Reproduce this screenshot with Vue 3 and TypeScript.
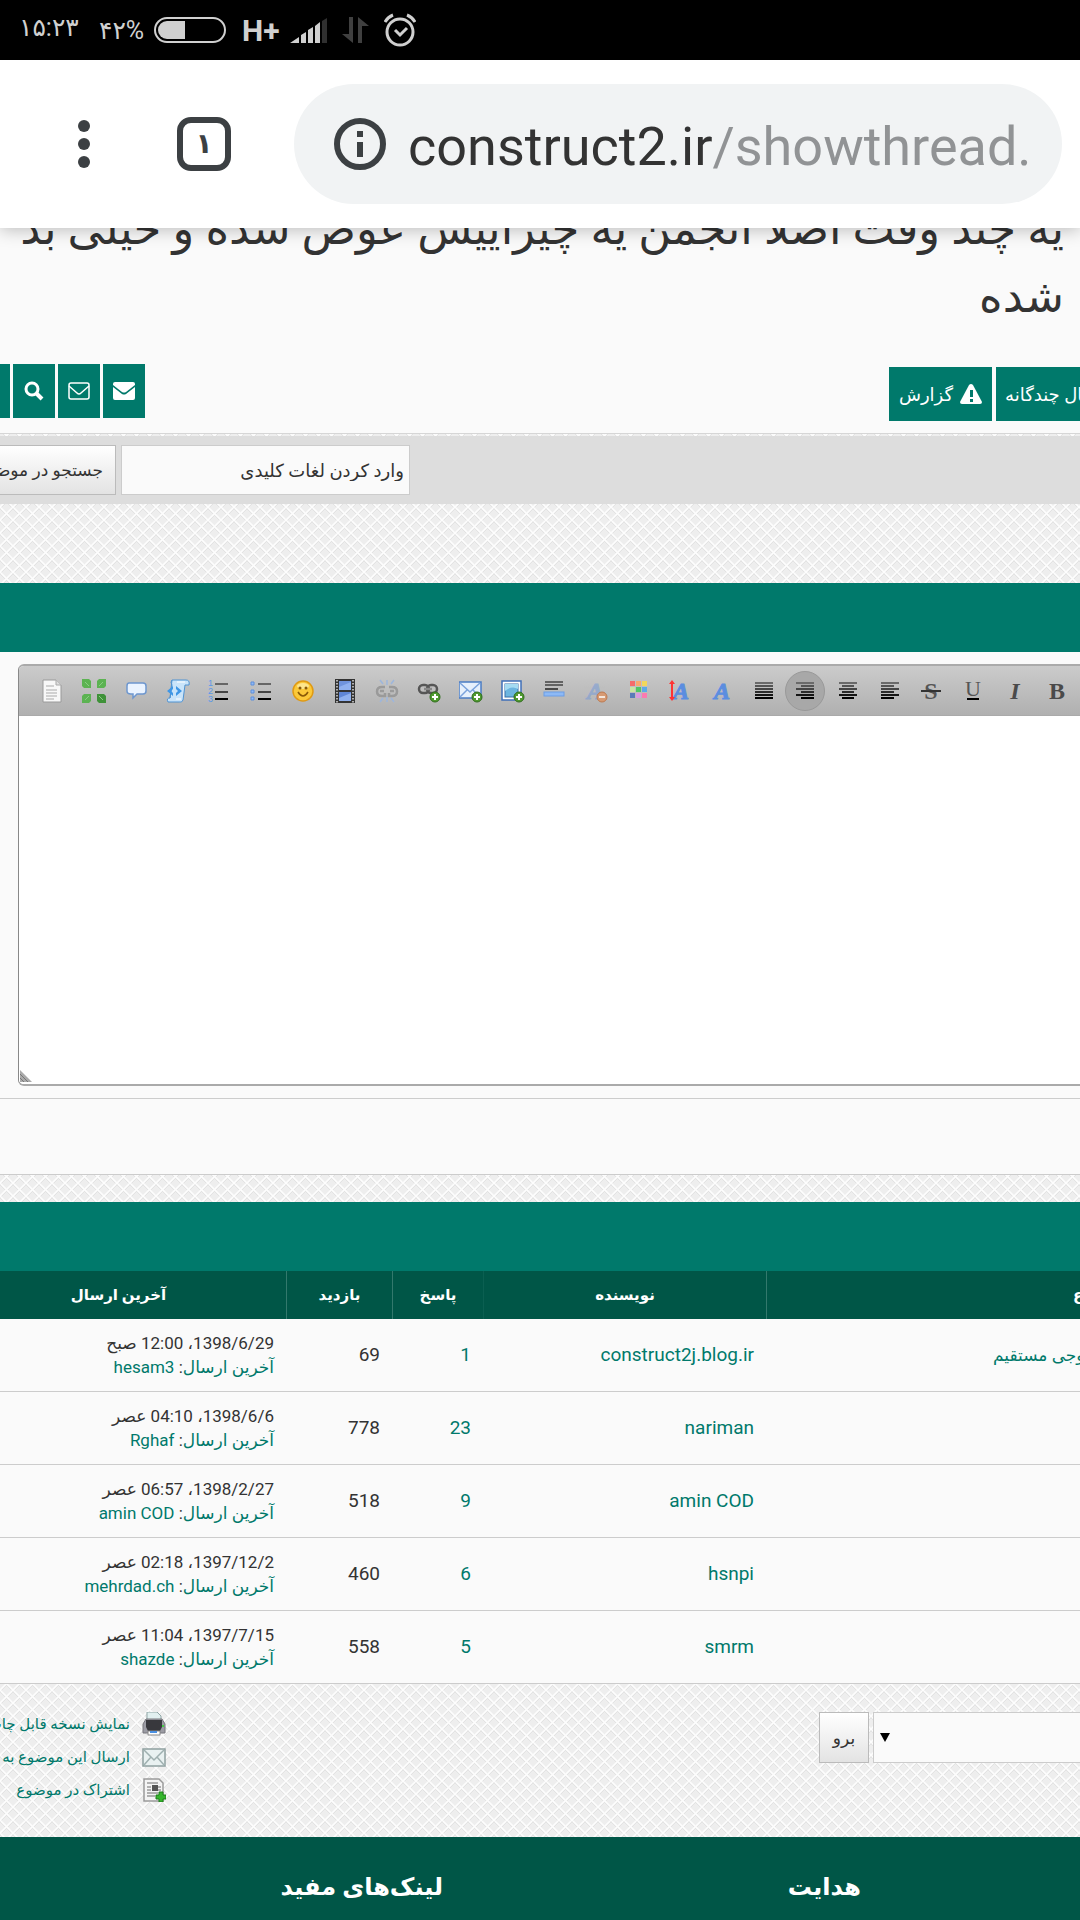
<script setup lang="ts">
interface Thread {
  topic: string
  author: string
  replies: number
  views: number
  date: string
  last: string
}

interface Tool {
  name: string
  svg: string
  active?: boolean
}

const threads: Thread[] = [
  { topic: 'لینک خروجی مستقیم', author: 'construct2j.blog.ir', replies: 1, views: 69, date: '1398/6/29، 12:00 صبح', last: 'hesam3' },
  { topic: '', author: 'nariman', replies: 23, views: 778, date: '1398/6/6، 04:10 عصر', last: 'Rghaf' },
  { topic: '', author: 'amin COD', replies: 9, views: 518, date: '1398/2/27، 06:57 عصر', last: 'amin COD' },
  { topic: '', author: 'hsnpi', replies: 6, views: 460, date: '1397/12/2، 02:18 عصر', last: 'mehrdad.ch' },
  { topic: '', author: 'smrm', replies: 5, views: 558, date: '1397/7/15، 11:04 عصر', last: 'shazde' },
]

const plus = '<circle cx="18" cy="18" r="5" fill="#4f9a2f" stroke="#2f6d1c"/><path d="M18 15v6M15 18h6" stroke="#fff" stroke-width="2"/>'

// Horizontal bars of an alignment icon, given as [x, width] pairs
const bars = (rows: number[][]): string =>
  rows
    .map(([x, w], i) => `<rect x="${x}" y="${3 + i * 3}" width="${w}" height="2" fill="${['#6a6a6a', '#555', '#444', '#2c2c2c', '#161616', '#000'][i]}"/>`)
    .join('')

const letter = (ch: string, x: number, extra: string): string =>
  `<text x="${x}" y="20" text-anchor="middle" font-family="Liberation Serif, serif" font-size="24" ${extra}>${ch}</text>`

const blueA = (x: number, opacity = 1): string =>
  letter('A', x, `font-weight="bold" font-style="italic" fill="#5b8de0" stroke="#5b8de0" opacity="${opacity}"`)

const tools: Tool[] = [
  { name: 'source', svg: '<path d="M3 1h13l5 5v17H3z" fill="#f8f8f8" stroke="#9a9a9a"/><path d="M16 1v5h5" fill="#ddd" stroke="#aaa"/><path d="M6 7h8M6 11h11M6 14h11M6 17h11M6 20h8" stroke="#c4c4c4" stroke-width="1.5"/>' },
  { name: 'maximize', svg: '<g fill="#5cb352"><path d="M0 0h7l2 2v7H2L0 7z"/><path d="M24 0h-7l-2 2v7h7l2-2z"/><path d="M0 24h7l2-2v-7H2l-2 2z"/><path d="M24 24h-7l-2-2v-7h7l2 2z" fill="#3f9239"/></g><path d="M3 3l4 4M21 3l-4 4M3 21l4-4M21 21l-4-4" stroke="#8bce84" stroke-width="1"/>' },
  { name: 'quote', svg: '<path d="M5 4h14q3 0 3 3v5q0 3-3 3h-6l-4 4v-4H7q-4 0-4-3V7q0-3 2-3z" fill="#eaf3ff" stroke="#6e97cf" stroke-width="1.5"/>' },
  { name: 'code', svg: '<path d="M6 1h14q4 0 3 5h-4l-2 15q-1 3-4 2H2q-2-4 2-4z" fill="#c9e4fa" stroke="#4f93d2"/><path d="M6 1q-2 2 0 5L4 19" fill="none" stroke="#4f93d2"/><path d="M7 7l-6 5 6 5v-3l-2-2 2-2zM10 7l6 5-6 5v-3l2-2-2-2z" fill="#3f97e6"/><path d="M11 3h8M10 20h5" stroke="#fff"/>' },
  { name: 'numbered list', svg: '<g font-family="Liberation Sans, sans-serif" font-size="9" fill="#5a97e8"><text x="1" y="7">1</text><text x="1" y="15">2</text><text x="1" y="23">3</text></g><rect x="8" y="4" width="13" height="2" fill="#666"/><rect x="8" y="12" width="13" height="2" fill="#444"/><rect x="8" y="19" width="13" height="2" fill="#000"/>' },
  { name: 'bullet list', svg: '<g fill="#8fb9f5" stroke="#5f8fda"><path d="M2 3h3v3H2zM2 11h3v3H2zM2 18h3v3H2z"/></g><rect x="9" y="4" width="13" height="2" fill="#666"/><rect x="9" y="12" width="13" height="2" fill="#444"/><rect x="9" y="19" width="13" height="2" fill="#000"/>' },
  { name: 'emoticon', svg: '<circle cx="12" cy="12" r="10" fill="#fbc93a" stroke="#e09a13" stroke-width="1.5"/><ellipse cx="12" cy="7" rx="6" ry="3" fill="#fde58d"/><path d="M7 13q5 8 10 0" fill="none" stroke="#8a5a08" stroke-width="1.5"/><circle cx="9" cy="9" r="1.5" fill="#8a5a08"/><circle cx="15" cy="9" r="1.5" fill="#8a5a08"/>' },
  { name: 'video', svg: '<rect x="2" y="0" width="20" height="24" fill="#333"/><rect x="6" y="2" width="12" height="9" fill="#6f93dc"/><rect x="6" y="13" width="12" height="9" fill="#5f86d6"/><path d="M6 8l12-5v8H6zM6 19l12-5v8H6z" fill="#8fb0ee"/><path d="M4 1v23M20 1v23" stroke="#ddd" stroke-width="1.5" stroke-dasharray="1.5 1.5"/>' },
  { name: 'unlink', svg: '<g fill="none" stroke="#9a9a9a" stroke-width="2.5"><path d="M10 8H7q-5 0-5 4.5t5 4.5h3v-3M14 8h3q5 0 5 4.5t-5 4.5h-3v-3"/><path d="M5 12h4M15 12h4"/></g><path d="M12 6V1M8 5L5 1M16 5l3-4M12 18v5M8 19l-3 4M16 19l3 4" stroke="#9db6dc" stroke-width="1.5"/>' },
  { name: 'link', svg: '<g fill="none" stroke="#555" stroke-width="2.5"><rect x="2" y="6" width="10" height="8" rx="4"/><rect x="10" y="6" width="10" height="8" rx="4"/><path d="M7 10h8" stroke="#888"/></g>' + plus },
  { name: 'email', svg: '<rect x="0" y="3" width="22" height="16" fill="#e6f0fc" stroke="#4a7cc4" stroke-width="1.5"/><path d="M1 4l10 9 10-9M1 18l7-7M21 18l-7-7" fill="none" stroke="#7ba3dc" stroke-width="1.5"/>' + plus },
  { name: 'image', svg: '<rect x="1" y="2" width="19" height="19" fill="#fff" stroke="#3f6fb8" stroke-width="1.5"/><rect x="4" y="5" width="13" height="13" fill="#6cb5e0" stroke="#386fa8"/><path d="M4 12q7-6 13-2V5H4z" fill="#a5dbf2"/>' + plus },
  { name: 'horizontal rule', svg: '<path d="M3 3h18M3 6h18" stroke="#444" stroke-width="1.5"/><path d="M3 10h13" stroke="#222" stroke-width="1.5"/><rect x="2" y="13" width="20" height="4" fill="#8db9f5" stroke="#6b9de6" stroke-width="1"/>' },
  { name: 'remove format', svg: blueA(11, 0.4) + '<circle cx="18" cy="18" r="5" fill="#d79a72" stroke="#bd7a50"/><path d="M15 18h6" stroke="#f5e6da" stroke-width="2"/>' },
  { name: 'color', svg: '<g><path d="M4 2h5v5H4z" fill="#f56b6b"/><path d="M10 2h5v5h-5z" fill="#fba86e"/><path d="M16 2h5v5h-5z" fill="#f2d75c"/><path d="M4 8h5v5H4z" fill="#c8e6a2"/><path d="M10 8h5v5h-5z" fill="#4fc764"/><path d="M16 8h5v5h-5z" fill="#5cabe8"/><path d="M4 14h5v5H4z" fill="#5a7bb8"/><path d="M10 14h5v5h-5z" fill="#d99be0"/><path d="M16 14h5v5h-5z" fill="#fb7bb0"/></g>' },
  { name: 'size', svg: blueA(13) + '<path d="M4 3v17" stroke="#f33" stroke-width="2"/><path d="M1 5l3-4 3 4zM1 18l3 4 3-4z" fill="#f33"/>' },
  { name: 'font', svg: blueA(12) },
  { name: 'justify', svg: bars([[3, 18], [3, 18], [3, 18], [3, 18], [3, 18], [3, 18]]) },
  { name: 'align right', svg: bars([[3, 18], [8, 13], [3, 18], [8, 13], [3, 18], [8, 13]]), active: true },
  { name: 'align center', svg: bars([[3, 18], [6, 12], [3, 18], [6, 12], [3, 18], [6, 12]]) },
  { name: 'align left', svg: bars([[3, 18], [3, 13], [3, 18], [3, 13], [3, 18], [3, 13]]) },
  { name: 'strikethrough', svg: letter('S', 12, 'font-weight="bold" fill="#555"') + '<path d="M2 12h20" stroke="#333" stroke-width="2"/>' },
  { name: 'underline', svg: '<text x="12" y="17" text-anchor="middle" font-family="Liberation Serif, serif" font-size="22" fill="#555">U</text><path d="M6 20h12" stroke="#000" stroke-width="2"/>' },
  { name: 'italic', svg: letter('I', 12, 'font-weight="bold" font-style="italic" fill="#4a4a4a"') },
  { name: 'bold', svg: letter('B', 12, 'font-weight="bold" fill="#4a4a4a"') },
]
</script>

<template>
  <div class="screen">
    <div class="status">
      <span class="clock">۱۵:۲۳</span>
      <span class="percent">۴۲%</span>
      <svg class="battery" width="72" height="26" viewBox="0 0 72 26">
        <rect x="1" y="1" width="70" height="24" rx="12" fill="none" stroke="#d0d0d0" stroke-width="2" />
        <path d="M31 4v18H13a9 9 0 0 1 0-18z" fill="#d0d0d0" />
      </svg>
      <span class="network">H+</span>
      <svg class="signal" width="38" height="26" viewBox="0 0 38 26">
        <path d="M0 26l9-6v6zM11 18l5-3v11h-5zM18 13l5-3v16h-5zM25 9l5-4v21h-5z" fill="#d0d0d0" />
        <path d="M32 4l5-3v25h-5z" fill="#303030" />
      </svg>
      <svg class="data" width="27" height="27" viewBox="0 0 27 27">
        <path d="M7 0h4v26L0 17h7zM16 26V0l11 9h-7v17z" fill="#404040" />
      </svg>
      <svg width="32" height="34" viewBox="0 0 32 34" fill="none" stroke="#d0d0d0" stroke-width="3">
        <circle cx="16" cy="19" r="13" />
        <path d="M1 9q3-5 8-7M31 9q-3-5-8-7M11 17l5 5 7-7" />
      </svg>
    </div>

    <header class="browser">
      <button class="more" aria-label="menu">
        <svg width="12" height="48" viewBox="0 0 12 48" fill="#3c4043">
          <circle cx="6" cy="6" r="6" /><circle cx="6" cy="24" r="6" /><circle cx="6" cy="42" r="6" />
        </svg>
      </button>
      <button class="tabs">۱</button>
      <div class="omnibox">
        <svg width="52" height="52" viewBox="0 0 52 52">
          <circle cx="26" cy="26" r="23" fill="none" stroke="#3c4043" stroke-width="6" />
          <path d="M23 13h6v6h-6zM23 24h6v15h-6z" fill="#3c4043" />
        </svg>
        <span class="url">construct2.ir<span class="path">/showthread.</span></span>
      </div>
    </header>

    <main dir="rtl">
      <section class="thread">
        <h1>یه چند وقت اصلا انجمن یه چیزاییش عوض شده و خیلی بد شده</h1>
        <div class="actions" dir="ltr">
          <div class="icon-buttons">
            <button class="green cut" aria-label="profile"></button>
            <button class="green square" aria-label="search">
              <svg width="20" height="20" viewBox="0 0 20 20" fill="none" stroke="#fff"><circle cx="8" cy="8" r="6" stroke-width="3" /><path d="M12 12l6 6" stroke-width="4" /></svg>
            </button>
            <button class="green square" aria-label="email">
              <svg width="22" height="18" viewBox="0 0 22 18" fill="none" stroke="#fff" stroke-width="1.5"><rect x="1" y="1" width="20" height="16" rx="2" /><path d="M1 4l8 7q2 2 4 0l8-7" /></svg>
            </button>
            <button class="green square" aria-label="message">
              <svg width="22" height="18" viewBox="0 0 22 18" fill="#fff"><path d="M2 0h18q2 0 2 2v1l-9 7q-2 1-4 0L0 3V2q0-2 2-2z" /><path d="M0 5l9 7q2 1 4 0l9-7v11q0 2-2 2H2q-2 0-2-2z" /></svg>
            </button>
          </div>
          <div class="text-buttons">
            <button class="green label" dir="rtl">
              <svg width="22" height="20" viewBox="0 0 22 20"><path d="M11 0q1 0 2 1l9 17q0 2-2 2H2q-2 0-2-2L9 1q1-1 2-1z" fill="#fff" /><path d="M10 6h3v7h-3zM10 15h3v3h-3z" fill="#00796b" /></svg>
              <span>گزارش</span>
            </button>
            <button class="green label wide" dir="rtl">ارسال چندگانه</button>
          </div>
        </div>
      </section>

      <form class="search" dir="ltr" @submit.prevent>
        <button class="plain" dir="rtl">جستجو در موضوع</button>
        <input type="text" dir="rtl" aria-label="وارد کردن لغات کلیدی" value="وارد کردن لغات کلیدی" />
      </form>

      <section class="reply">
        <div class="bar"></div>
        <div class="editor-wrap">
          <div class="editor">
            <div class="tools" dir="ltr">
              <button v-for="tool in tools" :key="tool.name" :class="{ active: tool.active }" :aria-label="tool.name">
                <svg width="24" height="24" viewBox="0 0 24 24" v-html="tool.svg"></svg>
              </button>
            </div>
            <textarea aria-label="پاسخ"></textarea>
            <svg class="grip" width="12" height="12" viewBox="0 0 12 12"><path d="M0 0l12 12H0z" fill="#aaa" /><path d="M0 4l8 8M0 8l4 4" stroke="#777" /></svg>
          </div>
        </div>
        <div class="submit"></div>
      </section>

      <section class="similar">
        <div class="bar"></div>
        <table>
          <colgroup>
            <col /><col class="c-author" /><col class="c-replies" /><col class="c-views" /><col class="c-last" />
          </colgroup>
          <thead>
            <tr><th>موضوع</th><th>نویسنده</th><th>پاسخ</th><th>بازدید</th><th>آخرین ارسال</th></tr>
          </thead>
          <tbody>
            <tr v-for="t in threads" :key="t.author">
              <td class="topic"><a v-if="t.topic" href="#">{{ t.topic }}</a></td>
              <td><a href="#">{{ t.author }}</a></td>
              <td><a href="#">{{ t.replies }}</a></td>
              <td>{{ t.views }}</td>
              <td class="last">{{ t.date }}<br /><a href="#">آخرین ارسال</a>: <a href="#">{{ t.last }}</a></td>
            </tr>
          </tbody>
        </table>
      </section>

      <section class="bottom" dir="ltr">
        <ul dir="rtl">
          <li>
            <svg width="24" height="24" viewBox="0 0 24 24"><path d="M5 0h10l4 4v6H5z" fill="#e2f0f0" stroke="#8fa5a5" /><path d="M1 12l3-5h16l3 5v9H1z" fill="#9c9ca4" stroke="#77777d" /><path d="M4 8h16v7l-2 4H6l-2-4z" fill="#38383d" /><path d="M6 19h12v4H6z" fill="#fff" stroke="#888" /><path d="M8 20h7" stroke="#4a90e2" stroke-width="2" /><path d="M20 14h2" stroke="#4c4" stroke-width="2" /></svg>
            <a href="#">نمایش نسخه قابل چاپ</a>
          </li>
          <li>
            <svg width="24" height="24" viewBox="0 0 24 24"><rect x="1" y="4" width="22" height="17" fill="#e9f1f1" stroke="#8fa0a0" stroke-width="1.5" /><path d="M2 5l10 10L22 5M2 20l7-8M22 20l-7-8" fill="none" stroke="#9fb0b0" stroke-width="1.5" /></svg>
            <a href="#">ارسال این موضوع به یک دوست</a>
          </li>
          <li>
            <svg width="24" height="24" viewBox="0 0 24 24"><path d="M2 1h15l4 4v18H2z" fill="#f4f4f4" stroke="#9a9a9a" stroke-width="1.5" /><path d="M5 5h11M5 9h4M5 12h4M5 15h11M5 18h8M16 9h3M16 12h3" stroke="#999" stroke-width="1.5" /><path d="M10 7h6v6h-6z" fill="#555" /><path d="M17 14h4v3h3v4h-3v3h-4v-3h-3v-4h3z" fill="#35b52c" stroke="#1f7d1a" /></svg>
            <a href="#">اشتراک در موضوع</a>
          </li>
        </ul>
        <form class="jump" @submit.prevent>
          <button class="plain go">برو</button>
          <span class="select"><select aria-label="پرش به انجمن"><option></option></select></span>
        </form>
      </section>
    </main>

    <footer dir="ltr">
      <h2 dir="rtl">لینک‌های مفید</h2>
      <h2 dir="rtl">هدایت</h2>
    </footer>
  </div>
</template>

<style>
body {
  margin: 0;
  overflow-x: hidden;
}
</style>

<style scoped>
* {
  box-sizing: border-box;
}
.screen {
  display: flex;
  flex-direction: column;
  min-height: 100vh;
  overflow: hidden;
  color: #333;
  font-family: Roboto, "DejaVu Sans", sans-serif;
  font-size: 19px;
  background: #eee url("data:image/svg+xml,%3Csvg xmlns='http://www.w3.org/2000/svg' width='13' height='13'%3E%3Cg fill='none'%3E%3Cpath d='M-1 1L14 16M-1-12L14 3M10-1L14 3M-1 16L16-1M-1 3L3-1' stroke='%23e3e3e3'/%3E%3Cpath d='M-1-1L14 14M-1 14L14-1' stroke='%23fdfdfd' stroke-width='1.5'/%3E%3C/g%3E%3C/svg%3E");
}
button {
  padding: 0;
  border: 0;
  color: inherit;
  font: inherit;
  background: none;
}
a {
  color: #00796b;
  text-decoration: none;
}
svg {
  display: block;
  flex: none;
}
.status {
  display: flex;
  align-items: center;
  height: 60px;
  padding-left: 19px;
  color: #d0d0d0;
  background: #000;
}
.clock {
  width: 80px;
  padding-bottom: 6px;
  font-size: 25px;
  white-space: nowrap;
}
.percent {
  width: 55px;
  font-size: 25px;
  white-space: nowrap;
}
.network {
  width: 48px;
  margin-left: 16px;
  font-size: 30px;
  font-weight: 700;
}
.data {
  margin: 0 15px 0 14px;
}
.browser {
  position: relative;
  z-index: 1;
  display: flex;
  align-items: center;
  height: 168px;
  padding-right: 18px;
  background: #fff;
  box-shadow: 0 2px 16px rgba(0, 0, 0, 0.25);
}
.more {
  margin-left: 78px;
}
.tabs {
  width: 54px;
  height: 54px;
  margin: 0 63px 0 87px;
  border: 6px solid #3c4043;
  border-radius: 14px;
  color: #3c4043;
  font-size: 28px;
  font-weight: 700;
  line-height: 38px;
}
.omnibox {
  display: flex;
  flex: 1;
  align-items: center;
  gap: 22px;
  min-width: 0;
  height: 120px;
  padding: 0 30px 0 40px;
  border-radius: 60px;
  background: #f1f3f4;
}
.url {
  flex: 1;
  overflow: hidden;
  padding-top: 6px;
  color: #333;
  font-size: 54px;
  line-height: 64px;
  white-space: nowrap;
}
.path {
  color: #919395;
}
.thread {
  display: flow-root;
  height: 206px;
  border-bottom: 1px solid #d6d6d6;
  background: #fafafa;
}
h1 {
  margin: -33px 16px 33px 16px;
  font-size: 45px;
  font-weight: 400;
  line-height: 68px;
}
.actions {
  display: flex;
  justify-content: space-between;
}
.icon-buttons,
.text-buttons {
  display: flex;
  gap: 3px;
}
.text-buttons {
  gap: 4px;
  margin: 3px -60px 0 0;
}
.green {
  display: flex;
  align-items: center;
  justify-content: center;
  height: 54px;
  color: #fff;
  font-size: 18px;
  background: #00796b;
}
.cut {
  width: 10px;
}
.square {
  width: 42px;
}
.label {
  gap: 7px;
  width: 103px;
}
.wide {
  justify-content: flex-end;
  width: 144px;
  padding-left: 9px;
}
.search {
  display: flex;
  gap: 5px;
  margin-top: 2px;
  padding: 9px 0;
  background: #ddd;
}
.plain {
  border: 1px solid #bbb;
  font-size: 17px;
  background: linear-gradient(#fff, #e3e3e3);
}
.search .plain {
  width: 160px;
  height: 50px;
  margin-left: -44px;
  padding-right: 12px;
  text-align: right;
  white-space: nowrap;
}
.search input {
  width: 289px;
  height: 50px;
  padding: 0 5px;
  border: 1px solid #ccc;
  color: #333;
  font: inherit;
  font-size: 18px;
  background: #fafafa;
}
.reply {
  margin-top: 79px;
}
.bar {
  height: 69px;
  background: #00796b;
}
.editor-wrap {
  padding: 12px 0 12px 18px;
  background: #fafafa;
}
.editor {
  position: relative;
  overflow: hidden;
  border: 2px solid #aaa;
  border-right: 0;
  border-left: 1px solid #888;
  border-radius: 6px 0 0 6px;
  background: #fff;
}
.tools {
  display: grid;
  grid-template-columns: repeat(25, minmax(0, 1fr));
  align-items: center;
  height: 50px;
  padding: 0 2px 0 12px;
  border-bottom: 1px solid #aaa;
  background: linear-gradient(#cbcbcb, #b0b0b0);
}
.tools button {
  display: flex;
  align-items: center;
  justify-content: center;
  height: 40px;
}
.tools .active {
  width: 40px;
  border: 1px solid #999;
  border-radius: 50%;
  background: #a8a8a8;
}
textarea {
  display: block;
  width: 100%;
  height: 368px;
  border: 0;
  resize: none;
  background: #fff;
}
.grip {
  position: absolute;
  bottom: 2px;
  left: 1px;
}
.submit {
  height: 77px;
  border: solid #ccc;
  border-width: 1px 0;
  background: #fafafa;
}
.similar {
  margin-top: 27px;
}
table {
  width: calc(100% + 402px);
  margin: 0 -352px 0 -50px;
  table-layout: fixed;
  border-collapse: separate;
  border-spacing: 0;
  background: #fafafa;
}
.c-author {
  width: 283px;
}
.c-replies {
  width: 91px;
}
.c-views {
  width: 106px;
}
.c-last {
  width: 336px;
}
th {
  height: 48px;
  padding: 0;
  border-left: 1px solid #33796d;
  color: #fff;
  font-size: 15px;
  background: #005647;
}
th:nth-child(2) {
  border-left-color: #0b5f51;
}
td {
  height: 73px;
  padding: 0 12px;
  border-bottom: 1px solid #ccc;
  line-height: 24px;
}
.topic {
  padding-left: 227px;
  font-size: 17px;
  text-align: left;
}
.last {
  font-size: 17px;
}
.bottom {
  display: flex;
  justify-content: space-between;
  height: 153px;
  padding-top: 28px;
}
ul {
  width: 296px;
  margin: 0 0 0 -130px;
  padding: 0;
  list-style: none;
}
li {
  display: flex;
  align-items: center;
  gap: 12px;
  height: 33px;
  padding-bottom: 10px;
  font-size: 15px;
  white-space: nowrap;
}
.jump {
  display: flex;
  gap: 4px;
}
.go {
  width: 50px;
  height: 51px;
}
.select {
  position: relative;
}
.select::after {
  position: absolute;
  top: 21px;
  left: 7px;
  border: solid transparent;
  border-width: 9px 5px 0;
  border-top-color: #000;
  content: "";
}
select {
  display: block;
  width: 207px;
  height: 51px;
  border: 1px solid #ccc;
  border-right: 0;
  border-radius: 0;
  appearance: none;
  background: #fafafa;
}
footer {
  display: grid;
  flex: 1;
  grid-template-columns: 443px 418px;
  background: #005647;
}
h2 {
  margin: 34px 0 0;
  color: #fff;
  font-size: 24px;
  line-height: 32px;
}
</style>
